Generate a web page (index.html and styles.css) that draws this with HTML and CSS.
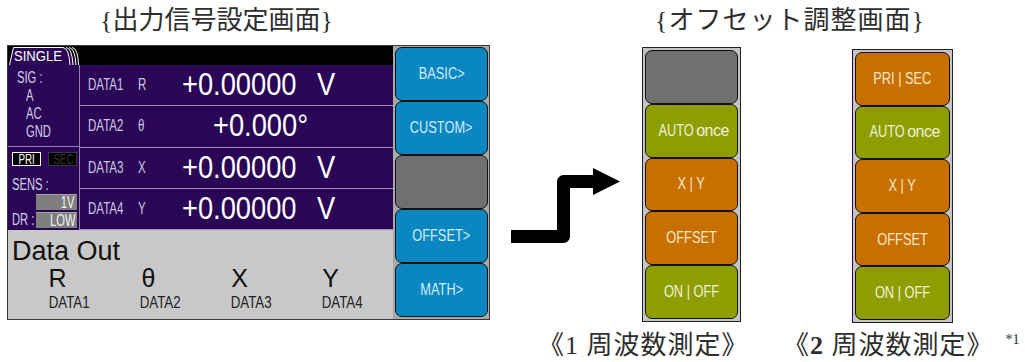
FILE: index.html
```html
<!DOCTYPE html>
<html lang="ja">
<head>
    <meta charset="UTF-8">
    <meta name="viewport" content="width=device-width, initial-scale=1.0">
    <title>出力信号設定画面 / オフセット調整画面</title>
    <link rel="stylesheet" href="styles.css">
</head>
<body>

<div class="captions">
    <div class="cap cap-main">{出力信号設定画面}</div>
    <div class="cap cap-offset">{オフセット調整画面}</div>
</div>

<div class="stage">
    <div class="screen">
        <div class="lcd">
            <div class="topbar">
                <svg class="tab" width="71" height="19" viewBox="0 0 71 19">
                    <polygon points="1,19 5,1.5 56,1.5 64,8 69,19" fill="#2a0656"/>
                    <path d="M1.5 19 L5.5 1.5 H55" stroke="#fff" stroke-width="1" fill="none"/>
                    <path d="M55 1.5 Q61 2 62 19 M58 1.5 Q64 2 65 19 M61 1.5 Q67 2 68 19 M64 1.5 Q70 2 70.5 19" stroke="#fff" stroke-width="1" fill="none"/>
                    <text x="6" y="14.5" font-family="Liberation Sans, sans-serif" font-size="15" fill="#fff" textLength="48" lengthAdjust="spacingAndGlyphs">SINGLE</text>
                </svg>
            </div>
            <div class="middle">
                <div class="side">
                    <div class="sig">
                        <div><span class="nx">SIG :</span></div>
                        <div class="sig-item"><span class="nx">A</span></div>
                        <div class="sig-item"><span class="nx">AC</span></div>
                        <div class="sig-item"><span class="nx">GND</span></div>
                    </div>
                    <div class="sens">
                        <div class="flags">
                            <span class="flag on"><span class="nx nx-c">PRI</span></span>
                            <span class="flag off"><span class="nx nx-c">SEC</span></span>
                        </div>
                        <div class="sens-head"><span class="nx">SENS :</span></div>
                        <div class="setting"><span class="box"><span class="nx nx-r">1V</span></span></div>
                        <div class="setting setting-dr"><span class="setting-name"><span class="nx">DR :</span></span><span class="box"><span class="nx nx-r">LOW</span></span></div>
                    </div>
                </div>
                <div class="rows">
                    <div class="row"><span class="key nx">DATA1</span><span class="sym nx">R</span><span class="val">+0.00000</span><span class="unit">V</span></div>
                    <div class="row row-deg"><span class="key nx">DATA2</span><span class="sym nx">θ</span><span class="val">+0.000°</span></div>
                    <div class="row"><span class="key nx">DATA3</span><span class="sym nx">X</span><span class="val">+0.00000</span><span class="unit">V</span></div>
                    <div class="row"><span class="key nx">DATA4</span><span class="sym nx">Y</span><span class="val">+0.00000</span><span class="unit">V</span></div>
                </div>
            </div>
            <div class="out">
                <div class="out-title">Data Out</div>
                <div class="out-grid">
                    <div class="out-letter">R</div>
                    <div class="out-letter">θ</div>
                    <div class="out-letter">X</div>
                    <div class="out-letter">Y</div>
                    <div class="out-label"><span class="nx nx-c">DATA1</span></div>
                    <div class="out-label"><span class="nx nx-c">DATA2</span></div>
                    <div class="out-label"><span class="nx nx-c">DATA3</span></div>
                    <div class="out-label"><span class="nx nx-c">DATA4</span></div>
                </div>
            </div>
        </div>
        <div class="softkeys">
            <div class="btn blue"><span class="nx nx-c">BASIC&gt;</span></div>
            <div class="btn blue"><span class="nx nx-c">CUSTOM&gt;</span></div>
            <div class="btn gray"></div>
            <div class="btn blue"><span class="nx nx-c">OFFSET&gt;</span></div>
            <div class="btn blue"><span class="nx nx-c">MATH&gt;</span></div>
        </div>
    </div>

    <svg class="arrow" width="152" height="278" viewBox="0 0 152 278">
        <path d="M21 191.5 H73.5 V136.5 H106" stroke="#000" stroke-width="13" fill="none" stroke-linejoin="round"/>
        <polygon points="103,123 130,136.5 103,150" fill="#000"/>
    </svg>

    <div class="panel panel-1">
        <div class="btn gray"></div>
        <div class="btn green"><span class="nx nx-c">AUTO</span><span class="once">once</span></div>
        <div class="btn orange"><span class="nx nx-c">X | Y</span></div>
        <div class="btn orange"><span class="nx nx-c">OFFSET</span></div>
        <div class="btn green"><span class="nx nx-c">ON | OFF</span></div>
    </div>

    <div class="panel panel-2">
        <div class="btn orange"><span class="nx nx-c">PRI | SEC</span></div>
        <div class="btn green"><span class="nx nx-c">AUTO</span><span class="once">once</span></div>
        <div class="btn orange"><span class="nx nx-c">X | Y</span></div>
        <div class="btn orange"><span class="nx nx-c">OFFSET</span></div>
        <div class="btn green"><span class="nx nx-c">ON | OFF</span></div>
    </div>
</div>

<div class="notes">
    <div class="note note-1">《1 周波数測定》</div>
    <div class="note">《<b>2</b> 周波数測定》<sup>*1</sup></div>
</div>

</body>
</html>
```

FILE: styles.css
```css
body {
    margin: 0;
    background-color: #fff;
    font-family: "Liberation Sans", Arial, sans-serif;
}
/* the instrument font is a narrow one: squeeze Liberation Sans */
.nx {
    display: inline-block;
    white-space: nowrap;
    transform: scaleX(0.72);
    transform-origin: left center;
}
.nx-c { transform-origin: center center; }
.nx-r { transform-origin: right center; }

.captions, .notes {
    font-family: "Liberation Serif", "Noto Sans CJK JP", serif;
    color: #2e2e2e;
}
.captions {
    display: flex;
    height: 45px;
    font-size: 26px;
    line-height: 42px;
}
.cap-main {
    margin-left: 100px;
    width: 555px;
}
.cap-offset {
    letter-spacing: 1px;
}
.stage {
    display: flex;
    align-items: flex-start;
    height: 278px;
    padding-left: 7px;
}

/* instrument screen */
.screen {
    display: flex;
    width: 483px;
    height: 275px;
    box-sizing: border-box;
    border: 1px solid #3a3a3a;
    background-color: #9c9c9c;
}
.lcd {
    width: 385px;
    display: flex;
    flex-direction: column;
}
.topbar {
    height: 19px;
    background-color: #000;
}
.tab {
    display: block;
}
.middle {
    display: flex;
    height: 165px;
    background-color: #2a0656;
}
.side {
    width: 72px;
    box-sizing: border-box;
    border-right: 1px solid #8e80b2;
    font-size: 16px;
    line-height: 18px;
    color: #d6cfea;
}
.side .nx {
    transform: scaleX(0.7);
}
.side .nx-c { transform-origin: center center; }
.side .nx-r { transform-origin: right center; }
.sig {
    height: 82px;
    box-sizing: border-box;
    padding: 4px 0 0 9px;
    border-bottom: 1px solid #8e80b2;
}
.sig-item {
    padding-left: 9px;
}
.sens {
    padding: 5px 0 0 4px;
}
.flags {
    display: flex;
    gap: 7px;
}
.flag {
    width: 29px;
    height: 14px;
    box-sizing: border-box;
    border: 1px solid;
    background-color: #000;
    font-size: 14px;
    line-height: 12px;
    text-align: center;
}
.flag.on { border-color: #fff; color: #fff; }
.flag.off { border-color: #3a3a3a; color: #333; }
.sens-head {
    margin-top: 11px;
    line-height: 16px;
}
.setting {
    display: flex;
    height: 16px;
    margin-top: 1px;
    padding-left: 24px;
}
.setting-dr {
    margin-top: 2px;
    padding-left: 0;
}
.setting-name {
    width: 24px;
    line-height: 16px;
}
.box {
    width: 41px;
    height: 16px;
    box-sizing: border-box;
    padding-right: 2px;
    background-color: #7e7e7e;
    border-top: 1px solid #a4a4a4;
    color: #f2f2f2;
    line-height: 15px;
    text-align: right;
}
.rows {
    flex: 1;
    display: flex;
    flex-direction: column;
}
.row {
    flex: 1;
    display: flex;
    align-items: center;
    padding-left: 8px;
    border-bottom: 1px solid #9c90b8;
    color: #cfc7e4;
}
.key {
    width: 50px;
    font-size: 16px;
}
.sym {
    width: 44px;
    font-size: 16px;
}
.val, .unit {
    display: inline-block;
    font-size: 31px;
    color: #fff;
    transform: scaleX(0.88);
    transform-origin: left center;
}
.val {
    width: 135px;
}
.row-deg .val {
    margin-left: 31px;
}
.out {
    flex: 1;
    padding: 8px 0 0 4px;
    background-color: #c8c8c8;
    color: #111;
}
.out-title {
    font-size: 27px;
    line-height: 27px;
}
.out-grid {
    display: grid;
    grid-template-columns: repeat(4, 91px);
    row-gap: 5px;
    margin: 1px 0 0 12px;
}
.out-letter {
    padding-right: 24px;
    font-size: 25px;
    line-height: 24px;
    text-align: center;
}
.out-label {
    font-size: 17px;
    line-height: 16px;
    text-align: center;
    color: #222;
}
.out-label .nx {
    transform: scaleX(0.78);
}

/* soft keys */
.softkeys {
    width: 96px;
    display: flex;
    flex-direction: column;
    box-sizing: border-box;
    padding: 1px 1px 2px 2px;
    background-color: #a8a8a8;
}
.btn {
    flex: 1;
    display: flex;
    align-items: center;
    justify-content: center;
    border: 1px solid #111;
    border-radius: 7px;
    font-size: 16px;
}
.btn .nx {
    transform: scaleX(0.8);
}
.blue { background-color: #0a87c0; color: #d4ecf8; }
.gray { background-color: #707070; }
.green { background-color: #8e9e00; color: #f2f2dc; }
.orange { background-color: #c77000; color: #f6e8c8; }
.once {
    margin-left: -2px;
    letter-spacing: -0.5px;
}
.arrow {
    display: block;
}
.panel {
    display: flex;
    flex-direction: column;
    box-sizing: border-box;
    padding: 2px;
    border: 1px solid #222;
    background-color: #c4c4c4;
}
.panel-1 {
    width: 99px;
    height: 275px;
    margin-top: 2px;
}
.panel-2 {
    width: 101px;
    height: 274px;
    margin: 4px 0 0 111px;
    border-left-color: #2a0656;
}

/* notes below */
.notes {
    display: flex;
    height: 39px;
    padding: 0 0 0 538px;
    font-size: 26px;
    line-height: 46px;
    letter-spacing: 1px;
    white-space: nowrap;
    overflow: hidden;
}
.note {
    flex-shrink: 0;
}
.note-1 {
    width: 245px;
}
.note sup {
    margin-left: 12px;
    font-size: 14px;
    line-height: 0;
    letter-spacing: 0;
    vertical-align: 10px;
}
```
